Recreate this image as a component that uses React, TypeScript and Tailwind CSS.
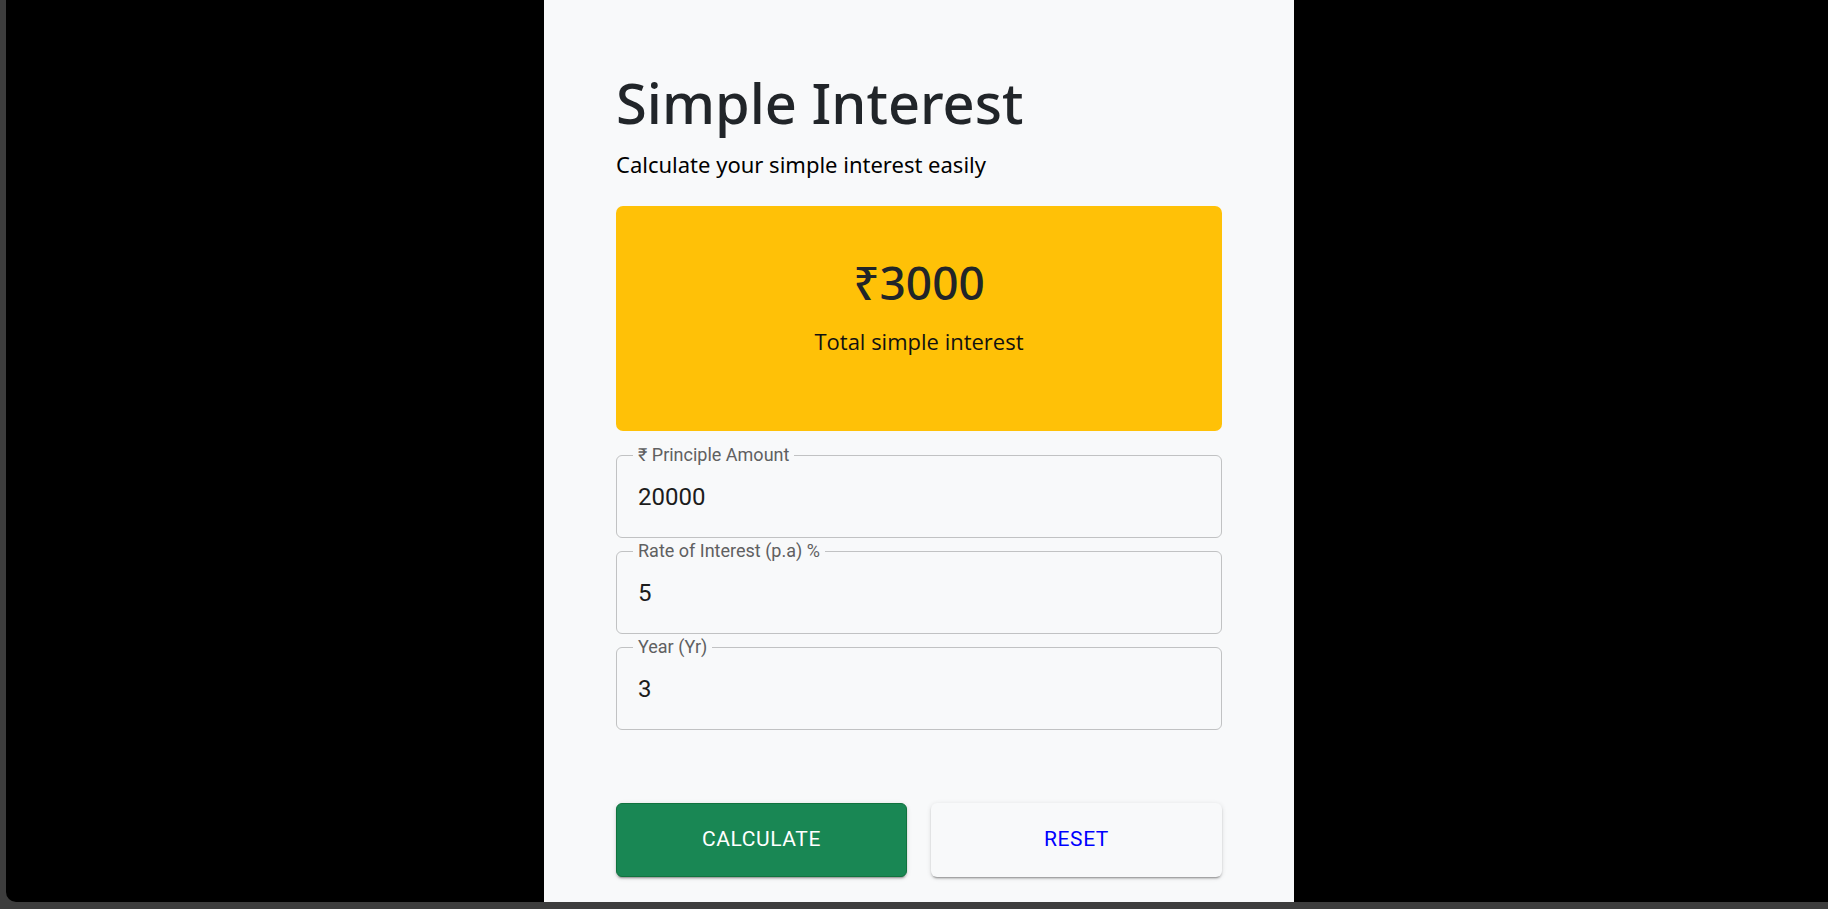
import { useState } from 'react';

type FieldProps = {
  label: string;
  value: string;
  onChange: (v: string) => void;
};

function OutlinedField({ label, value, onChange }: FieldProps) {
  return (
    <div className="relative rounded-[6px] border border-[#c1c2c3] px-[21px] py-[23.5px]">
      <label className="absolute left-[16px] top-[-10px] bg-[#f8f9fa] px-[5px] font-['Roboto',sans-serif] text-[18px] leading-[18px] text-[#5f6061]">
        {label}
      </label>
      <input
        type="text"
        value={value}
        onChange={(e) => onChange(e.target.value)}
        className="block w-full bg-transparent font-['Roboto',sans-serif] text-[24px] leading-[34px] text-[#1c1c1c] outline-none"
      />
    </div>
  );
}

export default function App() {
  const [principle, setPrinciple] = useState('20000');
  const [rate, setRate] = useState('5');
  const [year, setYear] = useState('3');
  const [interest, setInterest] = useState(3000);

  function handleCalculate() {
    const p = Number(principle) || 0;
    const r = Number(rate) || 0;
    const t = Number(year) || 0;
    setInterest((p * r * t) / 100);
  }

  // 全部クリア
  function handleReset() {
    setPrinciple('');
    setRate('');
    setYear('');
    setInterest(0);
  }

  return (
    <div className="h-[909px] w-full overflow-hidden bg-[#3d3d3d] pl-[6px]">
      <div className="flex h-[902px] justify-center overflow-hidden rounded-bl-[10px] bg-black pl-[4px]">
        <main className="h-full w-[750px] bg-[#f8f9fa] px-[72px] pt-[69px]">
          <h1 className="font-['Noto_Sans','Open_Sans',sans-serif] text-[56px] font-medium leading-[1.2] text-[#212529]">
            Simple Interest
          </h1>
          <p className="mt-[12px] font-['Noto_Sans','Open_Sans',sans-serif] text-[22px] leading-[1.5] text-black">
            Calculate your simple interest easily
          </p>

          <div className="mt-[25px] h-[225px] rounded-[7px] bg-[#ffc107] pt-[49px] text-center">
            <div className="font-['Noto_Sans','Open_Sans',sans-serif] text-[46px] font-medium leading-[1.2] text-[#212529]">
              ₹{interest}
            </div>
            <div className="mt-[15px] font-['Open_Sans',sans-serif] text-[22px] leading-[1.5] text-[#111]">
              Total simple interest
            </div>
          </div>

          <div className="mt-[24px] flex flex-col gap-[13px]">
            <OutlinedField label="₹ Principle Amount" value={principle} onChange={setPrinciple} />
            <OutlinedField label="Rate of Interest (p.a) %" value={rate} onChange={setRate} />
            <OutlinedField label="Year (Yr)" value={year} onChange={setYear} />
          </div>

          <div className="mt-[73px] grid grid-cols-2 gap-[24px]">
            <button
              onClick={handleCalculate}
              className="h-[74px] rounded-[6px] border border-[#10733e] bg-[#198754] font-['Roboto',sans-serif] text-[21px] font-normal uppercase tracking-[0.6px] text-white shadow-[0_3px_1px_-2px_rgba(0,0,0,0.2),0_2px_2px_0_rgba(0,0,0,0.14),0_1px_5px_0_rgba(0,0,0,0.12)]"
            >
              Calculate
            </button>
            <button
              onClick={handleReset}
              className="h-[74px] rounded-[6px] bg-[#f8f9fa] font-['Roboto',sans-serif] text-[21px] font-normal uppercase tracking-[0.6px] text-[#0000ff] shadow-[0_3px_1px_-2px_rgba(0,0,0,0.2),0_2px_2px_0_rgba(0,0,0,0.14),0_1px_5px_0_rgba(0,0,0,0.12)]"
            >
              Reset
            </button>
          </div>
        </main>
      </div>
    </div>
  );
}
